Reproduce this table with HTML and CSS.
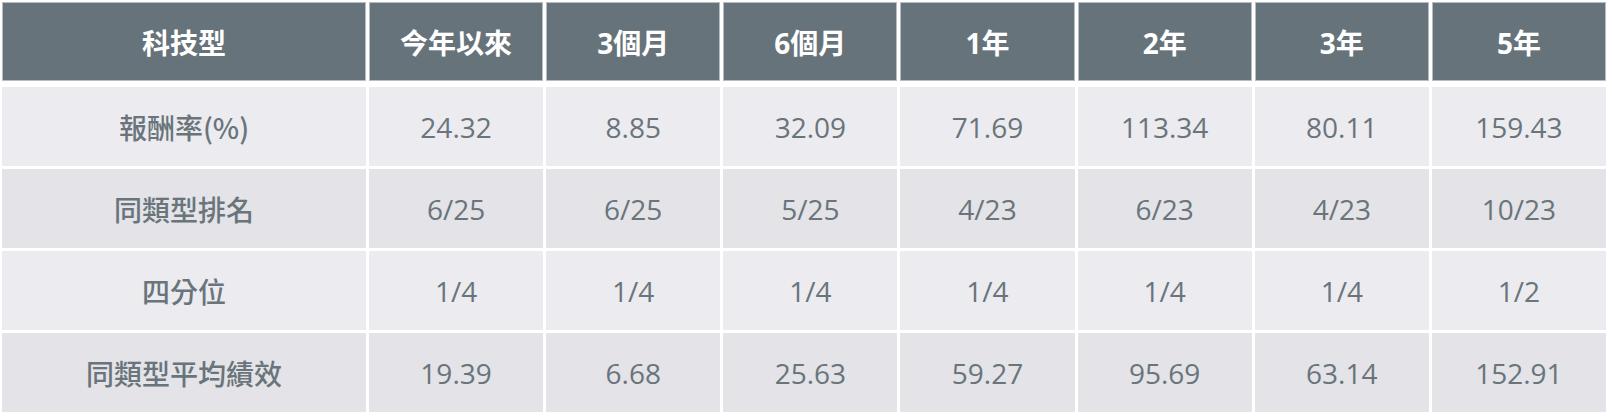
FILE: index.html
```html
<!DOCTYPE html>
<html lang="zh-Hant">
<head>
<meta charset="utf-8">
<title>科技型績效</title>
<link rel="stylesheet" href="styles.css">
</head>
<body>
<div class="perf">
  <div class="row head">
    <div class="cell">科技型</div>
    <div class="cell">今年以來</div>
    <div class="cell">3個月</div>
    <div class="cell">6個月</div>
    <div class="cell">1年</div>
    <div class="cell">2年</div>
    <div class="cell">3年</div>
    <div class="cell">5年</div>
  </div>
  <div class="body">
    <div class="row odd">
      <div class="cell label">報酬率(%)</div>
      <div class="cell">24.32</div>
      <div class="cell">8.85</div>
      <div class="cell">32.09</div>
      <div class="cell">71.69</div>
      <div class="cell">113.34</div>
      <div class="cell">80.11</div>
      <div class="cell">159.43</div>
    </div>
    <div class="row even">
      <div class="cell label">同類型排名</div>
      <div class="cell">6/25</div>
      <div class="cell">6/25</div>
      <div class="cell">5/25</div>
      <div class="cell">4/23</div>
      <div class="cell">6/23</div>
      <div class="cell">4/23</div>
      <div class="cell">10/23</div>
    </div>
    <div class="row odd">
      <div class="cell label">四分位</div>
      <div class="cell">1/4</div>
      <div class="cell">1/4</div>
      <div class="cell">1/4</div>
      <div class="cell">1/4</div>
      <div class="cell">1/4</div>
      <div class="cell">1/4</div>
      <div class="cell">1/2</div>
    </div>
    <div class="row even">
      <div class="cell label">同類型平均績效</div>
      <div class="cell">19.39</div>
      <div class="cell">6.68</div>
      <div class="cell">25.63</div>
      <div class="cell">59.27</div>
      <div class="cell">95.69</div>
      <div class="cell">63.14</div>
      <div class="cell">152.91</div>
    </div>
  </div>
</div>
</body>
</html>
```
FILE: styles.css
```css
html, body {
  margin: 0;
  padding: 0;
  background: #ffffff;
}

body {
  font-family: "Open Sans", "Noto Sans CJK TC", sans-serif;
  font-size: 28px;
  color: #69747b;
}

.perf {
  width: 1604px;
  padding: 2px;
  display: flex;
  flex-direction: column;
  gap: 6px;
}

.body {
  display: flex;
  flex-direction: column;
  gap: 3px;
}

.row {
  display: grid;
  grid-template-columns: 364px repeat(7, 1fr);
  column-gap: 3px;
  height: 79px;
}

.cell {
  display: flex;
  align-items: center;
  justify-content: center;
  white-space: nowrap;
}

.head .cell {
  background: #67737a;
  color: #ffffff;
  font-weight: 700;
  box-shadow: inset 0 0 0 1px #b7bec3;
}

.odd .cell {
  background: #ecebf0;
}

.even .cell {
  background: #e3e3e8;
}

.label {
  font-family: "Noto Sans CJK TC", sans-serif;
  font-weight: 500;
  color: #69747b;
}
```
